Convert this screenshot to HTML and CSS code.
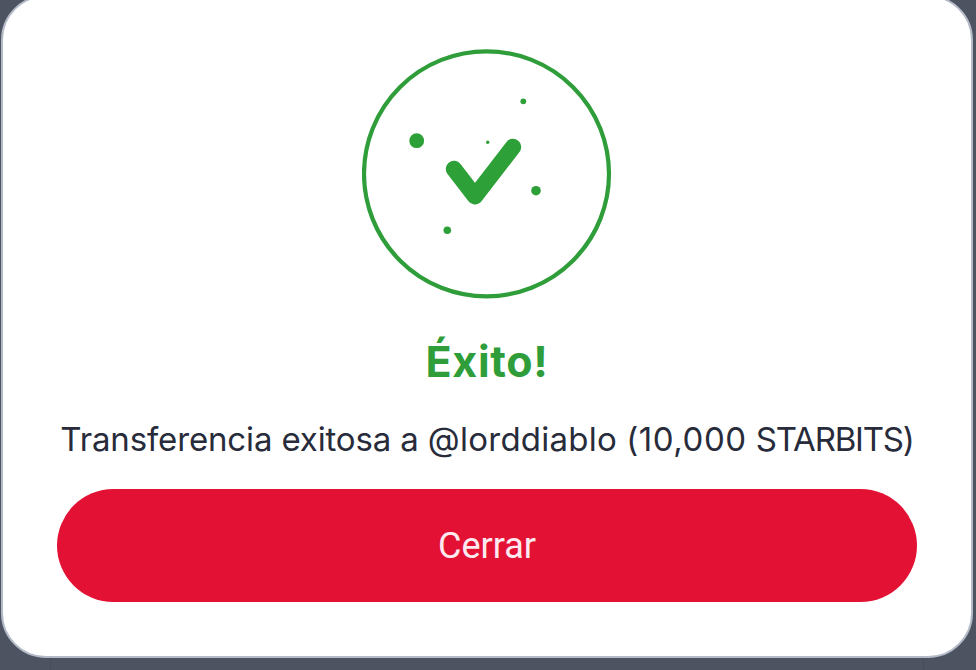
FILE: index.html
```
<!DOCTYPE html>
<html lang="es">
<head>
    <meta charset="UTF-8">
    <meta name="viewport" content="width=device-width, initial-scale=1.0">
    <title>Éxito</title>
    <link rel="stylesheet" href="styles.css">
</head>
<body>
    <div class="modal">
        <svg class="success-icon" viewBox="0 0 250 250" fill="#2da037">
            <circle cx="124.5" cy="124.8" r="122.5" fill="none" stroke="#2f9e3a" stroke-width="4.2"/>
            <circle cx="54.7" cy="91.7" r="7.4"/>
            <circle cx="161.3" cy="52.3" r="2.9"/>
            <circle cx="125.7" cy="93.3" r="1.7"/>
            <circle cx="174" cy="141.7" r="4.8"/>
            <circle cx="85.3" cy="181.2" r="3.8"/>
            <path d="M92 120 L113 147.3 L151 98" fill="none" stroke="#2da037" stroke-width="16.4" stroke-linecap="round" stroke-linejoin="round"/>
        </svg>
        <h1>Éxito!</h1>
        <p class="message">Transferencia exitosa a <span class="user">@lorddiablo</span> <span class="amount">(10,000</span> <span class="currency">STARBITS)</span></p>
        <button class="close-btn" type="button">Cerrar</button>
    </div>
</body>
</html>
```

FILE: styles.css
```
body {
    margin: 0;
    height: 670px;
    overflow: hidden;
    /* dimmed page with the faint edges of the panel behind the modal */
    background: linear-gradient(90deg, #4d5361 50px, #474b5a 50px, #474b5a 51px, #4d5361 51px, #4d5361 923px, #474b5a 923px, #474b5a 924px, #4d5361 924px);
    font-family: Inter, "Liberation Sans", sans-serif;
}
.modal {
    box-sizing: border-box;
    width: 972px;
    height: 663px;
    margin: -5px 0 0 1px;
    padding: 52px 54px 0;
    display: flex;
    flex-direction: column;
    align-items: center;
    background: white;
    border: 2px solid #b4bac7;
    border-radius: 45px;
}
.success-icon {
    flex: none;
    width: 250px;
    height: 250px;
}
h1 {
    margin: 32px 0 0;
    font-size: 43px;
    line-height: 60px;
    font-weight: 700;
    letter-spacing: 0.7px;
    color: #2f9e3a;
}
.message {
    margin: 24px 0 0;
    font-size: 33px;
    line-height: 48px;
    letter-spacing: -0.14px;
    white-space: nowrap;
    color: #272b3a;
}
.user {
    letter-spacing: 0.25px;
}
.amount {
    letter-spacing: 0.55px;
}
.currency {
    letter-spacing: -1.2px;
}
.close-btn {
    flex: none;
    align-self: flex-start;
    width: 860px;
    height: 113px;
    margin-top: 26px;
    padding: 0;
    border: none;
    border-radius: 57px;
    background: #e31235;
    color: #fdeaf0;
    font-family: Roboto, sans-serif;
    font-size: 36px;
}
```
